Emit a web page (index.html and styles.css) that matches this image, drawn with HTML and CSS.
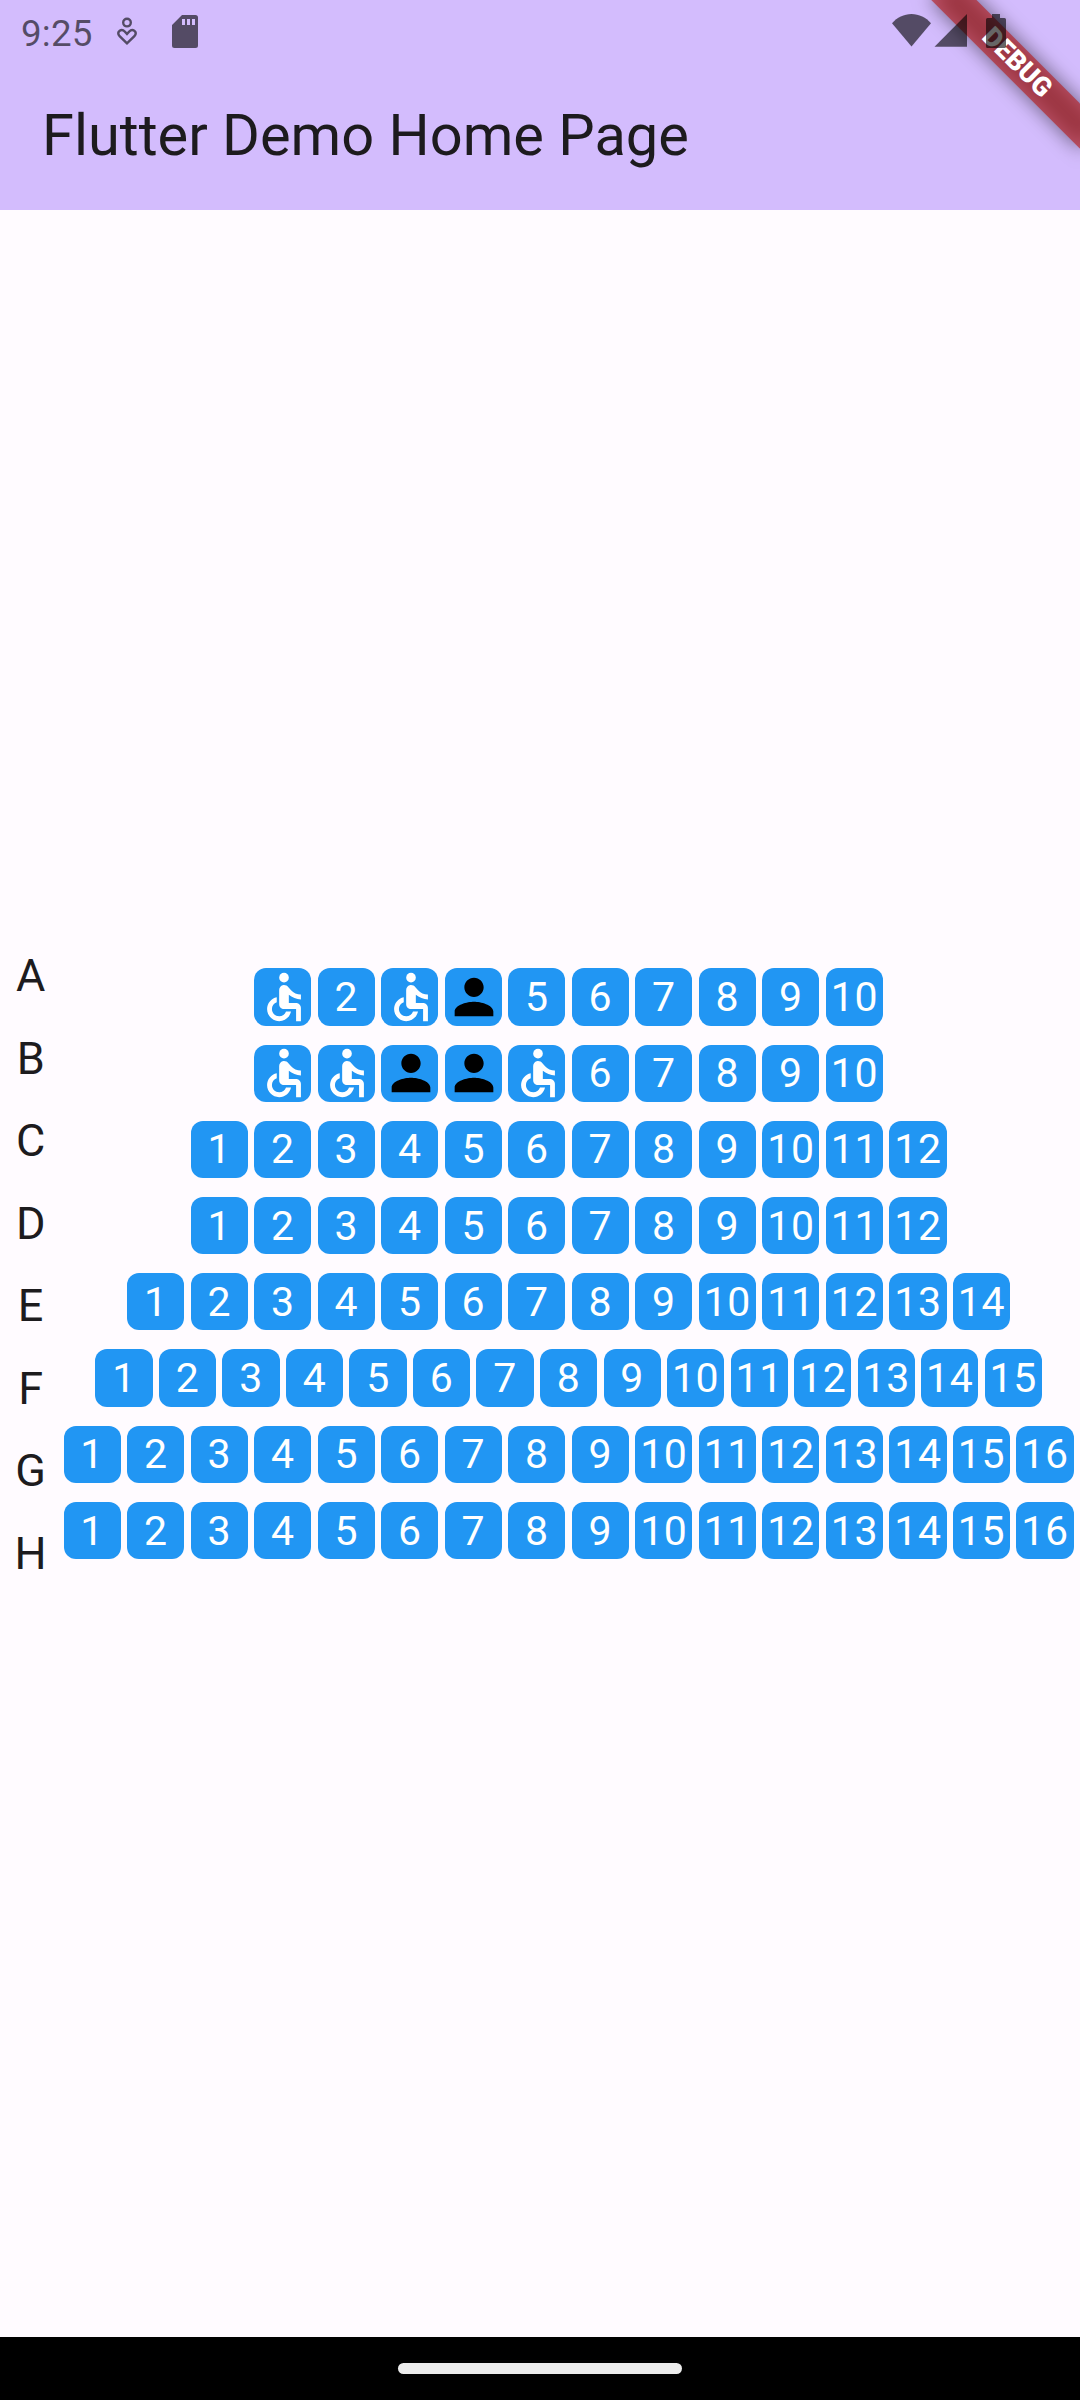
FILE: index.html
```
<!DOCTYPE html>
<html lang="en">
<head>
<meta charset="utf-8">
<title>Flutter Demo Home Page</title>
<link rel="stylesheet" href="styles.css">
</head>
<body>
<svg class="symbols" aria-hidden="true">
  <symbol id="wheelchair" viewBox="0 0 24 24"><circle cx="12" cy="4" r="2"/><path d="M19 13v-2c-1.54.02-3.09-.75-4.07-1.83l-1.29-1.43c-.17-.19-.38-.34-.61-.45-.01 0-.01-.01-.02-.01H13c-.35-.2-.75-.3-1.19-.26C10.76 7.11 10 8.04 10 9.09V15c0 1.1.9 2 2 2h5v5h2v-5.5c0-1.1-.9-2-2-2h-3v-3.45c1.29 1.07 3.25 1.94 5 1.95zm-6.17 5c-.41 1.16-1.52 2-2.83 2-1.66 0-3-1.34-3-3 0-1.31.84-2.41 2-2.83V12.1c-2.28.46-4 2.48-4 4.9 0 2.76 2.24 5 5 5 2.42 0 4.44-1.72 4.9-4h-2.07z"/></symbol>
  <symbol id="person" viewBox="0 0 24 24"><path d="M12 12c2.21 0 4-1.79 4-4s-1.79-4-4-4-4 1.79-4 4 1.79 4 4 4zm0 2c-2.67 0-8 1.34-8 4v2h16v-2c0-2.66-5.33-4-8-4z"/></symbol>
</svg>
<div class="screen">
  <header class="app-bar">
    <div class="status-bar">
      <span class="time">9:25</span>
      <svg class="status-left" width="90" height="40" viewBox="114 12 90 40">
        <circle cx="127" cy="22.6" r="3.800" fill="none" stroke="currentColor" stroke-width="2.4"/>
        <path d="M127 43.300l-7.400-7.200c-1.900-1.900-1.700-4.200.1-5.400 1.700-1.100 3.700-.6 5 .8l2.300 2.400 2.300-2.400c1.300-1.400 3.300-1.900 5-.8 1.800 1.200 2 3.500.1 5.400z" fill="none" stroke="currentColor" stroke-width="2.500"/>
        <path fill-rule="evenodd" d="M182 15h13.500a2.500 2.500 0 0 1 2.500 2.500v28a2.500 2.500 0 0 1-2.500 2.500h-21a2.500 2.500 0 0 1-2.500-2.500V25zm0 4v6h3v-6zm5 0v6h3v-6zm5 0v6h3v-6z" fill="currentColor"/>
      </svg>
      <svg class="status-right" width="118" height="40" viewBox="890 12 118 40" fill="currentColor">
        <path d="M911.500 46.500L892 23.200C897 17.500 904 14 911.500 14s14.500 3.500 19.500 9.200z"/>
        <path d="M934.500 46.800H967V14z"/>
        <path d="M992 14h8v4h4.500a1.500 1.500 0 0 1 1.500 1.500v27a1.500 1.500 0 0 1-1.500 1.500h-17a1.500 1.500 0 0 1-1.500-1.500v-27a1.500 1.500 0 0 1 1.500-1.500h4.500z"/>
      </svg>
    </div>
    <h1 class="title">Flutter Demo Home Page</h1>
  </header>
  <div class="debug-banner"><span>DEBUG</span></div>
  <main class="hall">
    <div class="labels">
      <span>A</span><span>B</span><span>C</span><span>D</span><span>E</span><span>F</span><span>G</span><span>H</span>
    </div>
    <div class="seats">
      <div class="row"><span class="seat"><svg><use href="#wheelchair"/></svg></span><span class="seat">2</span><span class="seat"><svg><use href="#wheelchair"/></svg></span><span class="seat taken"><svg><use href="#person"/></svg></span><span class="seat">5</span><span class="seat">6</span><span class="seat">7</span><span class="seat">8</span><span class="seat">9</span><span class="seat">10</span></div>
      <div class="row"><span class="seat"><svg><use href="#wheelchair"/></svg></span><span class="seat"><svg><use href="#wheelchair"/></svg></span><span class="seat taken"><svg><use href="#person"/></svg></span><span class="seat taken"><svg><use href="#person"/></svg></span><span class="seat"><svg><use href="#wheelchair"/></svg></span><span class="seat">6</span><span class="seat">7</span><span class="seat">8</span><span class="seat">9</span><span class="seat">10</span></div>
      <div class="row"><span class="seat">1</span><span class="seat">2</span><span class="seat">3</span><span class="seat">4</span><span class="seat">5</span><span class="seat">6</span><span class="seat">7</span><span class="seat">8</span><span class="seat">9</span><span class="seat">10</span><span class="seat">11</span><span class="seat">12</span></div>
      <div class="row"><span class="seat">1</span><span class="seat">2</span><span class="seat">3</span><span class="seat">4</span><span class="seat">5</span><span class="seat">6</span><span class="seat">7</span><span class="seat">8</span><span class="seat">9</span><span class="seat">10</span><span class="seat">11</span><span class="seat">12</span></div>
      <div class="row"><span class="seat">1</span><span class="seat">2</span><span class="seat">3</span><span class="seat">4</span><span class="seat">5</span><span class="seat">6</span><span class="seat">7</span><span class="seat">8</span><span class="seat">9</span><span class="seat">10</span><span class="seat">11</span><span class="seat">12</span><span class="seat">13</span><span class="seat">14</span></div>
      <div class="row"><span class="seat">1</span><span class="seat">2</span><span class="seat">3</span><span class="seat">4</span><span class="seat">5</span><span class="seat">6</span><span class="seat">7</span><span class="seat">8</span><span class="seat">9</span><span class="seat">10</span><span class="seat">11</span><span class="seat">12</span><span class="seat">13</span><span class="seat">14</span><span class="seat">15</span></div>
      <div class="row"><span class="seat">1</span><span class="seat">2</span><span class="seat">3</span><span class="seat">4</span><span class="seat">5</span><span class="seat">6</span><span class="seat">7</span><span class="seat">8</span><span class="seat">9</span><span class="seat">10</span><span class="seat">11</span><span class="seat">12</span><span class="seat">13</span><span class="seat">14</span><span class="seat">15</span><span class="seat">16</span></div>
      <div class="row"><span class="seat">1</span><span class="seat">2</span><span class="seat">3</span><span class="seat">4</span><span class="seat">5</span><span class="seat">6</span><span class="seat">7</span><span class="seat">8</span><span class="seat">9</span><span class="seat">10</span><span class="seat">11</span><span class="seat">12</span><span class="seat">13</span><span class="seat">14</span><span class="seat">15</span><span class="seat">16</span></div>
    </div>
  </main>
  <footer class="nav-bar"><div class="handle"></div></footer>
</div>
</body>
</html>
```
FILE: styles.css
```
* { box-sizing: border-box; }
body { margin: 0; font-family: Roboto, "Liberation Sans", sans-serif; }
.symbols { position: absolute; width: 0; height: 0; }
.screen {
  position: relative;
  display: flex;
  flex-direction: column;
  width: 1080px;
  height: 2400px;
  overflow: hidden;
  background: #fffbff;
  color: #1d1b1e;
}
.app-bar { height: 210px; background: #d3bcfd; }
.status-bar {
  position: relative;
  z-index: 2;
  display: flex;
  align-items: flex-start;
  height: 63px;
  padding: 12px 72px 0 21px;
  color: rgba(0, 0, 0, 0.6);
}
.time { width: 93px; font-size: 36.75px; line-height: 43px; letter-spacing: 0.2px; }
.status-right { margin-left: auto; }
.title {
  margin: 0;
  padding: 38px 42px 0;
  font-size: 57.75px;
  font-weight: 400;
  line-height: 68px;
}
.debug-banner {
  position: absolute;
  z-index: 1;
  top: 47.35px;
  left: 911.9px;
  width: 210px;
  height: 31.5px;
  transform: rotate(45deg);
  color: #fff;
  font-size: 26.8px;
  font-weight: 900;
  line-height: 31.5px;
  text-align: center;
}
.debug-banner::before,
.debug-banner::after { content: ""; position: absolute; z-index: -1; inset: 0; }
.debug-banner::before { background: rgba(0, 0, 0, 0.5); filter: blur(10px); }
.debug-banner::after { background: rgba(183, 28, 28, 0.63); }
.hall { flex: 1; display: flex; align-items: flex-start; padding-top: 725px; }
.labels {
  display: flex;
  flex-direction: column;
  width: 60.3px;
  padding-left: 1px;
  font-size: 45px;
  line-height: 82.5px;
  text-align: center;
}
.seats { display: flex; flex-direction: column; width: 1016.6px; padding-top: 23.8px; }
.row { display: flex; justify-content: center; align-items: center; gap: 6.34px; height: 76.24px; }
.seat {
  display: flex;
  justify-content: center;
  align-items: center;
  width: 57.2px;
  height: 57.2px;
  border-radius: 12px;
  background: #2196f3;
  color: #fff;
  font-size: 41px;
  letter-spacing: 0.66px;
}
.seat svg { flex: none; width: 58px; height: 58px; margin-left: 1.6px; fill: currentColor; }
.seat.taken { color: #000; }
.nav-bar { display: flex; justify-content: center; height: 63px; padding-top: 26px; background: #000; }
.handle { width: 284px; height: 11px; border-radius: 5.5px; background: #ececec; }
```
